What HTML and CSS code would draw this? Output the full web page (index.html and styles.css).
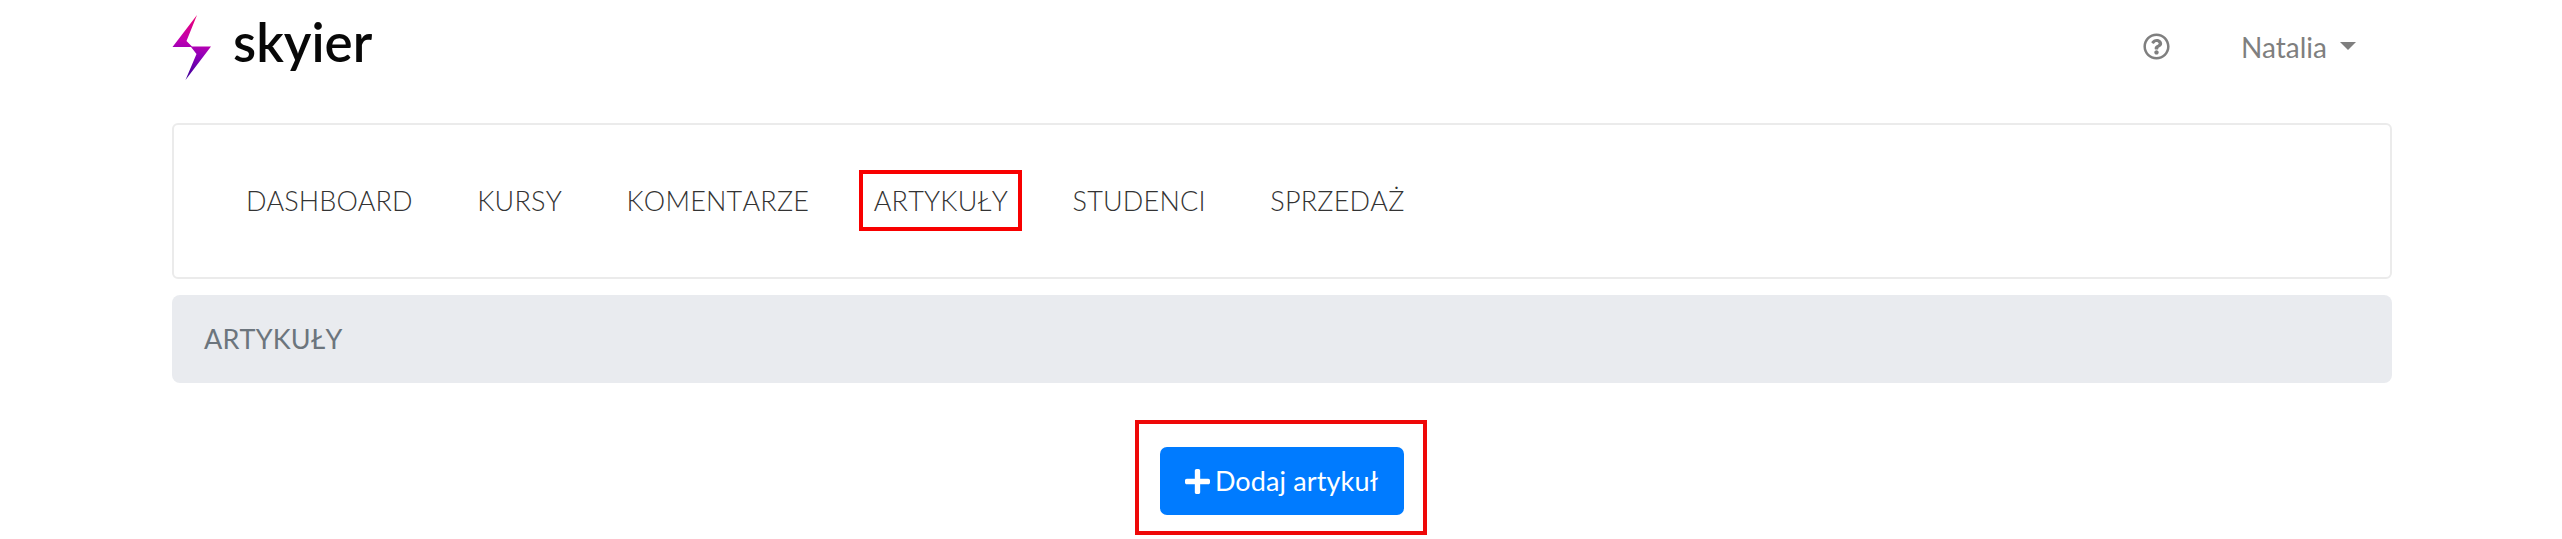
FILE: index.html
```html
<!DOCTYPE html>
<html lang="pl">
<head>
<meta charset="utf-8">
<title>Skyier</title>
<link rel="stylesheet" href="styles.css">
</head>
<body>
<div class="container">
  <header class="topbar">
    <a class="brand">
      <svg class="brand-mark" width="40" height="68" viewBox="0 0 40 68" aria-hidden="true">
        <defs>
          <linearGradient id="bolt" gradientUnits="userSpaceOnUse" x1="25" y1="0" x2="14" y2="66">
            <stop offset="0" stop-color="#ee0070"/>
            <stop offset=".42" stop-color="#c000b0"/>
            <stop offset=".62" stop-color="#8c00b8"/>
            <stop offset="1" stop-color="#3a0098"/>
          </linearGradient>
        </defs>
        <path fill="url(#bolt)" d="M25 1 14.5 27 20 32.5H39L13.500 66 24.500 40 19 33H0.500Z"/>
      </svg>
      <span class="brand-name">skyier</span>
    </a>
    <div class="user-tools">
      <svg class="help" width="27" height="27" viewBox="0 0 512 512" aria-hidden="true"><path fill="currentColor" d="M256 8C119.043 8 8 119.083 8 256c0 136.997 111.043 248 248 248s248-111.003 248-248C504 119.083 392.957 8 256 8zm0 448c-110.532 0-200-89.431-200-200 0-110.495 89.472-200 200-200 110.491 0 200 89.471 200 200 0 110.530-89.431 200-200 200zm107.244-255.200c0 67.052-72.421 68.084-72.421 92.863V300c0 6.627-5.373 12-12 12h-45.647c-6.627 0-12-5.373-12-12v-8.659c0-35.745 27.100-50.034 47.579-61.516 17.561-9.845 28.324-16.541 28.324-29.579 0-17.246-21.999-28.693-39.784-28.693-23.189 0-33.894 10.977-48.942 29.969-4.057 5.120-11.460 6.071-16.666 2.124l-27.824-21.098c-5.107-3.872-6.251-11.066-2.644-16.363C184.846 131.491 214.940 112 261.794 112c49.071 0 101.450 38.304 101.450 88.800zM298 368c0 23.159-18.841 42-42 42s-42-18.841-42-42 18.841-42 42-42 42 18.841 42 42z"/></svg>
      <span class="user-name">Natalia</span>
      <span class="caret"></span>
    </div>
  </header>
  <nav class="menu">
    <a>DASHBOARD</a>
    <a>KURSY</a>
    <a>KOMENTARZE</a>
    <a class="marked">ARTYKUŁY</a>
    <a>STUDENCI</a>
    <a>SPRZEDAŻ</a>
  </nav>
  <div class="breadcrumb">ARTYKUŁY</div>
  <div class="actions">
    <div class="frame">
      <button class="add">
        <svg width="25" height="29" viewBox="0 0 448 512" aria-hidden="true"><path fill="currentColor" d="M416 208H272V64c0-17.670-14.330-32-32-32h-32c-17.670 0-32 14.330-32 32v144H32c-17.670 0-32 14.330-32 32v32c0 17.670 14.330 32 32 32h144v144c0 17.670 14.330 32 32 32h32c17.670 0 32-14.330 32-32V304h144c17.670 0 32-14.330 32-32v-32c0-17.670-14.330-32-32-32z"/></svg>
        <span>Dodaj artykuł</span>
      </button>
    </div>
  </div>
</div>
</body>
</html>
```
FILE: styles.css
```css
* { box-sizing: border-box; }
body {
  margin: 0;
  background: #fff;
  font-family: Lato, "Liberation Sans", sans-serif;
  font-size: 27px;
  line-height: 40px;
  overflow: hidden;
}
.container { width: 2220px; margin-left: 172px; }
.topbar {
  height: 123px;
  display: flex;
  justify-content: space-between;
  align-items: flex-start;
}
.brand { display: flex; padding-top: 14px; }
.brand-name {
  margin: -4px 0 0 21px;
  font-size: 53px;
  line-height: 64px;
  font-weight: 600;
  color: #080808;
}
.user-tools {
  display: flex;
  align-items: center;
  height: 40px;
  margin: 27px 36px 0 0;
  color: #7f7f7f;
}
.help { margin-top: -1px; }
.user-name { margin-left: 71px; font-size: 28px; }
.caret {
  margin: -2px 0 0 13px;
  border: 8px solid transparent;
  border-top-color: currentColor;
  border-bottom: 0;
}
.menu {
  height: 156px;
  display: flex;
  align-items: center;
  gap: 64.6px;
  padding: 0 0 1px 72px;
  border: 2px solid #ebebeb;
  border-radius: 6px;
  font-weight: 300;
  font-kerning: none;
  letter-spacing: .2px;
  color: #333;
}
.menu a:first-child { letter-spacing: .06px; }
.marked { position: relative; }
.marked::after {
  content: "";
  position: absolute;
  inset: -11px -14px -10px -15px;
  border: 4px solid #f80000;
}
.breadcrumb {
  height: 88px;
  margin-top: 16px;
  padding: 24px 32px;
  border-radius: 8px;
  background: #e9ebef;
  color: #6c757d;
  font-kerning: none;
  letter-spacing: .2px;
}
.actions { display: flex; justify-content: center; margin-top: 37px; }
.frame {
  width: 292px;
  height: 115px;
  margin-right: 2px;
  border: 4px solid #ee0808;
  display: flex;
  align-items: center;
  justify-content: center;
  padding: 7px 0 0 2px;
}
.add {
  width: 244px;
  height: 68px;
  border: 0;
  border-radius: 7px;
  background: #007bff;
  color: #fff;
  font: inherit;
  letter-spacing: .13px;
  display: flex;
  align-items: center;
  justify-content: center;
  gap: 5px;
  padding: 0 1px 0 0;
}
```
